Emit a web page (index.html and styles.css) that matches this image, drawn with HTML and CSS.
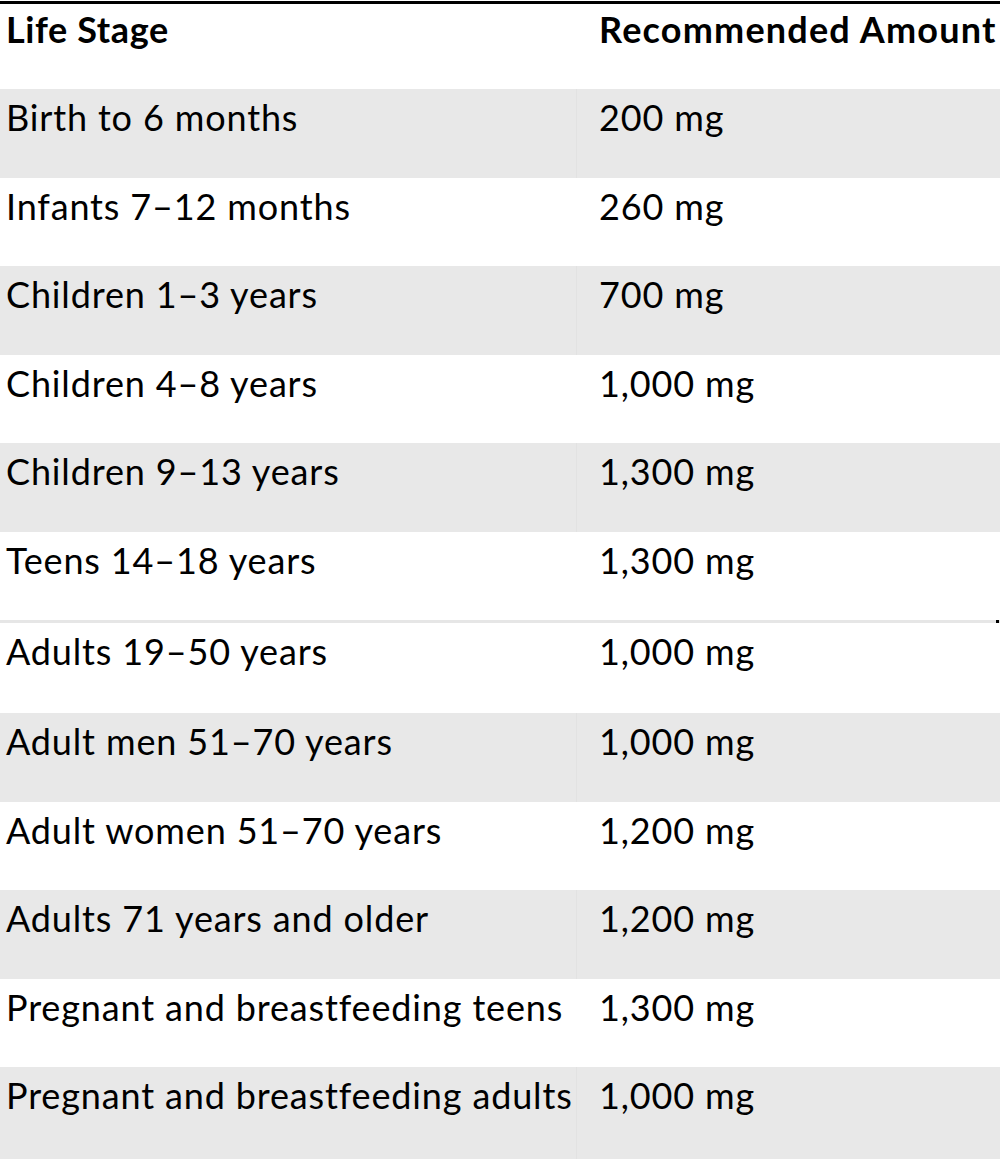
FILE: index.html
```html
<!DOCTYPE html>
<html lang="en">
<head>
<meta charset="utf-8">
<title>Calcium: Recommended Amounts</title>
<link rel="stylesheet" href="styles.css">
</head>
<body>
<table class="rda">
  <thead>
    <tr class="head">
      <th class="c1">Life Stage</th>
      <th class="c2">Recommended Amount</th>
    </tr>
  </thead>
  <tbody>
    <tr class="row shade"><td class="c1">Birth to 6 months</td><td class="c2">200 mg</td></tr>
    <tr class="row"><td class="c1">Infants 7–12 months</td><td class="c2">260 mg</td></tr>
    <tr class="row shade"><td class="c1">Children 1–3 years</td><td class="c2">700 mg</td></tr>
    <tr class="row"><td class="c1">Children 4–8 years</td><td class="c2">1,000 mg</td></tr>
    <tr class="row shade"><td class="c1">Children 9–13 years</td><td class="c2">1,300 mg</td></tr>
    <tr class="row last-top"><td class="c1">Teens 14–18 years</td><td class="c2">1,300 mg</td></tr>
  </tbody>
  <tbody class="lower">
    <tr class="row first-low"><td class="c1">Adults 19–50 years</td><td class="c2">1,000 mg</td></tr>
    <tr class="row shade"><td class="c1">Adult men 51–70 years</td><td class="c2">1,000 mg</td></tr>
    <tr class="row"><td class="c1">Adult women 51–70 years</td><td class="c2">1,200 mg</td></tr>
    <tr class="row shade"><td class="c1">Adults 71 years and older</td><td class="c2">1,200 mg</td></tr>
    <tr class="row"><td class="c1">Pregnant and breastfeeding teens</td><td class="c2">1,300 mg</td></tr>
    <tr class="row shade tall"><td class="c1">Pregnant and breastfeeding adults</td><td class="c2">1,000 mg</td></tr>
  </tbody>
</table>
</body>
</html>
```
FILE: styles.css
```css
html, body {
  margin: 0;
  padding: 0;
  background: #ffffff;
}

body {
  font-family: Lato, "Open Sans", "Liberation Sans", sans-serif;
  color: #000000;
  font-variant-ligatures: none;
}

.rda {
  width: 1000px;
  border-collapse: separate;
  border-spacing: 0;
  table-layout: fixed;
  margin-top: 1px;
  border-top: 3px solid #000000;
}

.rda .c1 {
  width: 577px;
  padding-left: 6px;
}

.rda .c2 {
  padding-left: 22px;
}

.rda th,
.rda td {
  text-align: left;
  vertical-align: top;
  white-space: nowrap;
  font-size: 36px;
  line-height: 40px;
  padding-right: 0;
  box-sizing: border-box;
}

.head th {
  font-weight: 700;
  height: 85px;
  padding-top: 5px;
  padding-bottom: 0;
  letter-spacing: 1.2px;
}

.head th.c1 {
  letter-spacing: 0.6px;
}

.row td {
  font-weight: 400;
  height: 88.5px;
  padding-top: 8px;
  padding-bottom: 0;
  letter-spacing: 0.85px;
}

.row.shade td {
  background: #e8e8e8;
}

.row.shade td.c1 {
  border-right: 1px solid #e2e2e2;
}

.row.last-top td {
  height: 91.5px;
  border-bottom: 3px solid #e6e6e6;
}

.row.first-low td {
  height: 90px;
}

.row.last-top td.c2 {
  position: relative;
}

.row.last-top td.c2::after {
  content: "";
  position: absolute;
  right: 1px;
  bottom: -3px;
  width: 3px;
  height: 3px;
  background: #000000;
}

.row.tall td {
  height: 92px;
}
```
